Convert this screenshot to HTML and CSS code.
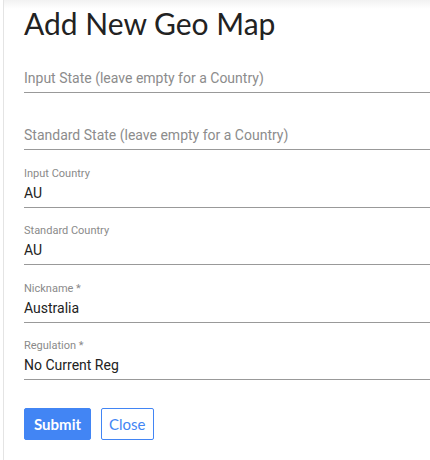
FILE: index.html
```html
<!DOCTYPE html>
<html lang="en">
<head>
    <meta charset="UTF-8">
    <meta name="viewport" content="width=device-width, initial-scale=1.0">
    <title>Add New Geo Map</title>
    <link rel="stylesheet" href="styles.css">
</head>
<body>
    <div class="dialog">
        <h1 class="dialog-title">Add New Geo Map</h1>

        <form class="geo-form">
            <div class="field">
                <label></label>
                <div class="value placeholder">Input State (leave empty for a Country)</div>
            </div>
            <div class="field">
                <label></label>
                <div class="value placeholder">Standard State (leave empty for a Country)</div>
            </div>
            <div class="field">
                <label>Input Country</label>
                <div class="value">AU</div>
            </div>
            <div class="field">
                <label>Standard Country</label>
                <div class="value">AU</div>
            </div>
            <div class="field">
                <label>Nickname *</label>
                <div class="value">Australia</div>
            </div>
            <div class="field">
                <label>Regulation *</label>
                <div class="value">No Current Reg</div>
            </div>

            <div class="actions">
                <button type="button" class="btn btn-primary">Submit</button>
                <button type="button" class="btn btn-outline">Close</button>
            </div>
        </form>
    </div>
</body>
</html>
```

FILE: styles.css
```css
body {
    margin: 0;
    padding: 0;
    background: #fff;
    overflow: hidden;
}

.dialog {
    margin-left: 3px;
    border-left: 1px solid #e4e4e4;
    padding-left: 20px;
    height: 460px;
    background: linear-gradient(#f2f2f2, #fff 9px);
    font-family: Roboto, sans-serif;
}

.dialog-title {
    margin: 0;
    padding-top: 11px;
    font-family: Lato, sans-serif;
    font-size: 30px;
    font-weight: 400;
    line-height: 24px;
    color: #222;
}

.geo-form {
    width: 420px;
}

.field {
    padding-top: 17.5px;
}

.field label {
    display: block;
    height: 12px;
    font-size: 11px;
    line-height: 12px;
    color: #8a8a8a;
}

.value {
    padding: 3px 0 4px;
    font-size: 14px;
    line-height: 20px;
    color: #222;
    border-bottom: 1px solid #999;
}

.value.placeholder {
    color: #8c8c8c;
}

.actions {
    display: flex;
    gap: 10px;
    margin-top: 28px;
}

.btn {
    height: 32px;
    padding: 0 7px;
    border-radius: 2px;
    font-family: Lato, sans-serif;
    font-size: 15px;
    cursor: pointer;
}

.btn-primary {
    padding: 0 9px;
    background-color: #4285f4;
    border: 1px solid #4285f4;
    color: #fff;
    font-weight: 700;
}

.btn-outline {
    background-color: #fff;
    border: 1px solid #4285f4;
    color: #4285f4;
}
```
